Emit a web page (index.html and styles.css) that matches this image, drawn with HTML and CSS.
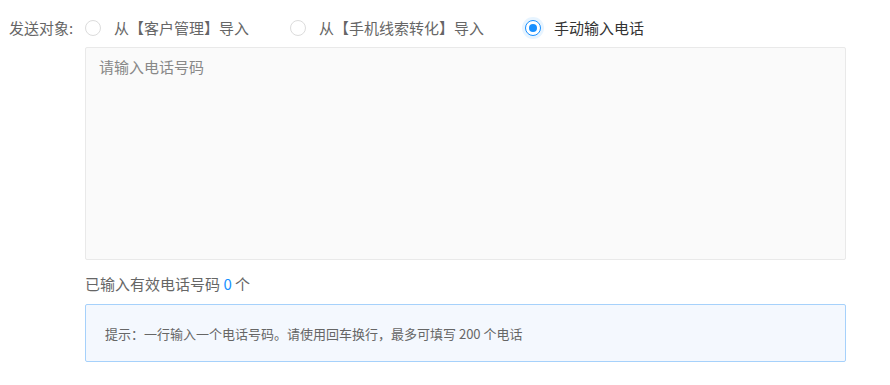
FILE: index.html
```html
<!DOCTYPE html>
<html lang="zh-CN">
<head>
  <meta charset="UTF-8" />
  <meta name="viewport" content="width=device-width, initial-scale=1" />
  <title>发送对象</title>
  <link rel="stylesheet" href="styles.css">
</head>
<body>
  <div class="form-row">
    <div class="form-label">发送对象:</div>
    <div class="form-body">
      <div class="radio-group">
        <label class="radio">
          <span class="radio-circle"></span>
          <span class="radio-text">从【客户管理】导入</span>
        </label>
        <label class="radio">
          <span class="radio-circle"></span>
          <span class="radio-text">从【手机线索转化】导入</span>
        </label>
        <label class="radio checked">
          <span class="radio-circle"></span>
          <span class="radio-text">手动输入电话</span>
        </label>
      </div>

      <textarea class="phone-input" placeholder="请输入电话号码"></textarea>

      <div class="phone-count">已输入有效电话号码 <span class="count-num">0</span> 个</div>

      <div class="tip-box">提示：一行输入一个电话号码。请使用回车换行，最多可填写 200 个电话</div>
    </div>
  </div>
</body>
</html>
```

FILE: styles.css
```css
* {
  margin: 0;
  padding: 0;
  box-sizing: border-box;
}
body {
  font-family: "Noto Sans CJK SC", "Noto Sans", sans-serif;
  font-size: 15px;
  color: #666;
  background: #fff;
}
.form-row {
  display: flex;
  padding: 17px 0 0 9px;
}
.form-label {
  width: 76px;
  line-height: 22px;
  color: #666;
  flex-shrink: 0;
}
.form-body {
  width: 761px;
  display: flex;
  flex-direction: column;
}
/* Радио-кнопки */
.radio-group {
  display: flex;
  align-items: center;
  gap: 41px;
  height: 22px;
}
.radio {
  display: flex;
  align-items: center;
  gap: 13px;
  cursor: pointer;
  line-height: 22px;
}
.radio-circle {
  width: 16px;
  height: 16px;
  border: 1px solid #dcdcdc;
  border-radius: 50%;
  background: #fff;
  position: relative;
  flex-shrink: 0;
}
.radio.checked .radio-circle {
  border-color: #1890ff;
  box-shadow: 0 0 0 3px rgba(24, 144, 255, 0.1);
}
.radio.checked .radio-circle::after {
  content: "";
  position: absolute;
  top: 3px;
  left: 3px;
  width: 8px;
  height: 8px;
  border-radius: 50%;
  background: #1890ff;
}
.radio.checked .radio-text {
  color: #333;
}
/* Поле ввода */
.phone-input {
  margin-top: 8px;
  height: 213px;
  width: 100%;
  resize: none;
  border: 1px solid #e9e9e9;
  border-radius: 2px;
  background: #fafafa;
  padding: 8px 13px;
  font-family: inherit;
  font-size: 15px;
  line-height: 22px;
  color: #333;
  outline: none;
}
.phone-input::placeholder {
  color: #888;
}
.phone-count {
  margin-top: 13px;
  line-height: 22px;
  color: #666;
}
.count-num {
  color: #1890ff;
}
.tip-box {
  margin-top: 9px;
  height: 58px;
  display: flex;
  align-items: center;
  padding: 0 19px;
  border: 1px solid #a6d1fb;
  border-radius: 2px;
  background: #f4f8fe;
  font-size: 13px;
  color: #666;
}
```
